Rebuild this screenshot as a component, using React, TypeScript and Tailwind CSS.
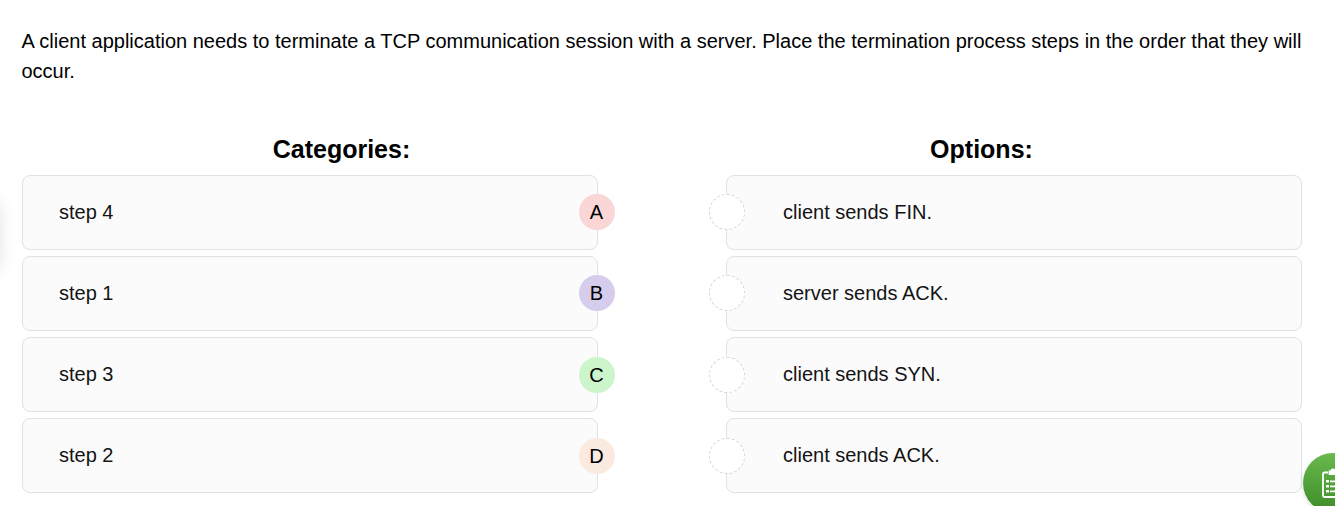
const categories = [
  { text: 'step 4', letter: 'A', tint: 'bg-[#fad7d6]', align: '' },
  { text: 'step 1', letter: 'B', tint: 'bg-[#d6cceb]', align: '' },
  { text: 'step 3', letter: 'C', tint: 'bg-[#ccf5cc]', align: 'mt-0.5' },
  { text: 'step 2', letter: 'D', tint: 'bg-[#faeae0]', align: 'mt-0.5' },
];

const options = [
  { text: 'client sends FIN.', align: '' },
  { text: 'server sends ACK.', align: '' },
  { text: 'client sends SYN.', align: 'mt-0.5' },
  { text: 'client sends ACK.', align: 'mt-0.5' },
];

const card =
  'flex h-[75px] w-[576px] items-center rounded-lg border border-[#dfe1e9] bg-[#fbfbfb] pb-px text-[20px] text-[#141414]';

const heading = 'h-[45px] pr-px text-center text-[25px] leading-[38px] font-bold';

function ClipboardButton() {
  return (
    <button
      aria-label="Notes"
      className="fixed -right-[28px] -bottom-[7px] flex h-[60px] w-[60px] items-center justify-center rounded-full bg-linear-to-b from-[#68b94d] to-[#3d8c28] shadow-[0_2px_5px_rgba(0,0,0,0.12)]"
    >
      <svg width="22" height="30" viewBox="0 0 22 30" fill="none" stroke="white" strokeWidth="1.800">
        <path d="M6 4.500H2.500Q1 4.500 1 6V27.500Q1 29 2.500 29H19.500Q21 29 21 27.500V6Q21 4.500 19.500 4.500H16" />
        <path d="M7.500 6V3.500H9Q9.300 1.500 11 1.500T13 3.500H14.500V6Z" fill="white" />
        <path d="M4 13.300h3M4 18.300h3M4 23.300h3" strokeWidth="2.400" />
        <path d="M8 13.300h10M8 18.300h10M8 23.300h10" strokeWidth="1.800" />
      </svg>
    </button>
  );
}

export default function App() {
  return (
    <main className="relative h-[506px] overflow-hidden bg-white pt-[26px] pr-[33px] pl-[22px] font-['Liberation_Sans',Arial,sans-serif] text-black">
      <p className="-ml-[0.5px] h-[60px] text-[20px] leading-[30px]">
        A client application needs to terminate a TCP communication session with a server. Place the
        termination process steps in the order that they will occur.
      </p>
      <div className="mt-11 grid grid-cols-2">
        <section>
          <h2 className={heading}>Categories:</h2>
          <div className="flex flex-col gap-1.5">
            {categories.map((item) => (
              <div key={item.letter} className={`${card} justify-between pl-9`}>
                <span>{item.text}</span>
                <span
                  className={`-mr-[18px] flex h-9 w-9 items-center justify-center rounded-full pr-px text-black ${item.align} ${item.tint}`}
                >
                  {item.letter}
                </span>
              </div>
            ))}
          </div>
        </section>
        <section>
          <h2 className={heading}>Options:</h2>
          <div className="flex flex-col items-end gap-1.5">
            {options.map((item) => (
              <div key={item.text} className={`${card} gap-[38px]`}>
                <span
                  className={`-ml-[18px] h-9 w-9 rounded-full border border-dashed border-[#d6d6d6] bg-white ${item.align}`}
                />
                <span>{item.text}</span>
              </div>
            ))}
          </div>
        </section>
      </div>
      <div className="absolute top-[204px] -left-[40px] h-[64px] w-[40px] shadow-[0_0_16px_rgba(0,0,0,0.12)]" />
      <ClipboardButton />
    </main>
  );
}
